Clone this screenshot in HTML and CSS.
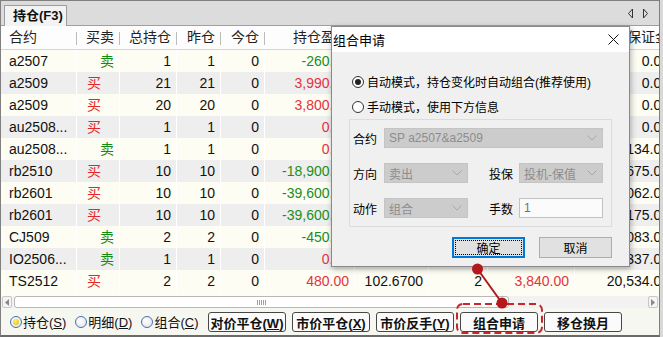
FILE: index.html
```html
<!DOCTYPE html>
<html>
<head>
  <meta charset="utf-8">
  <title>持仓</title>
  <link rel="stylesheet" href="styles.css">
</head>
<body>
  <div class="window">
    <div class="tabbar">
      <div class="tab">持仓(F3)</div>
      <div class="tab-arrows">
        <svg width="22" height="11" viewBox="0 0 22 11">
          <path d="M5.5 1 L1.5 5.5 L5.5 10 Z" fill="none" stroke="#333"/>
          <path d="M16.5 1 L20.5 5.5 L16.5 10 Z" fill="none" stroke="#333"/>
        </svg>
      </div>
    </div>

    <div class="grid">
      <div class="row head">
        <span class="left">合约</span><span>买卖</span><span>总持仓</span><span>昨仓</span><span>今仓</span><span>持仓盈亏</span><span>开仓均价</span><span>可平量</span><span>浮动盈亏</span><span>保证金</span>
      </div>
      <div class="row">
        <span class="left">a2507</span><span class="sell">卖</span><span>1</span><span>1</span><span>0</span><span class="green">-260.00</span><span>3,968.0000</span><span>1</span><span class="green">-260.00</span><span>0.00</span>
      </div>
      <div class="row alt">
        <span class="left">a2509</span><span class="buy">买</span><span>21</span><span>21</span><span>0</span><span class="red">3,990.00</span><span>3,852.0000</span><span>21</span><span class="red">3,990.00</span><span>0.00</span>
      </div>
      <div class="row">
        <span class="left">a2509</span><span class="buy">买</span><span>20</span><span>20</span><span>0</span><span class="red">3,800.00</span><span>3,850.0000</span><span>20</span><span class="red">3,800.00</span><span>0.00</span>
      </div>
      <div class="row alt">
        <span class="left">au2508...</span><span class="buy">买</span><span>1</span><span>1</span><span>0</span><span class="red">0.00</span><span>776.5000</span><span>1</span><span class="red">0.00</span><span>0.00</span>
      </div>
      <div class="row">
        <span class="left">au2508...</span><span class="sell">卖</span><span>1</span><span>1</span><span>0</span><span class="red">0.00</span><span>776.5000</span><span>1</span><span class="red">0.00</span><span>64,134.00</span>
      </div>
      <div class="row alt">
        <span class="left">rb2510</span><span class="buy">买</span><span>10</span><span>10</span><span>0</span><span class="green">-18,900.00</span><span>3,120.0000</span><span>10</span><span class="green">-18,900.00</span><span>30,675.00</span>
      </div>
      <div class="row">
        <span class="left">rb2601</span><span class="buy">买</span><span>10</span><span>10</span><span>0</span><span class="green">-39,600.00</span><span>3,340.0000</span><span>10</span><span class="green">-39,600.00</span><span>31,062.00</span>
      </div>
      <div class="row alt">
        <span class="left">rb2601</span><span class="buy">买</span><span>10</span><span>10</span><span>0</span><span class="green">-39,600.00</span><span>3,340.0000</span><span>10</span><span class="green">-39,600.00</span><span>31,175.00</span>
      </div>
      <div class="row">
        <span class="left">CJ509</span><span class="sell">卖</span><span>2</span><span>2</span><span>0</span><span class="green">-450.00</span><span>9,185.0000</span><span>2</span><span class="green">-450.00</span><span>12,083.00</span>
      </div>
      <div class="row alt">
        <span class="left">IO2506...</span><span class="sell">卖</span><span>1</span><span>1</span><span>0</span><span class="red">0.00</span><span>42.2000</span><span>1</span><span class="red">0.00</span><span>31,337.00</span>
      </div>
      <div class="row">
        <span class="left">TS2512</span><span class="buy">买</span><span>2</span><span>2</span><span>0</span><span class="red">480.00</span><span>102.6700</span><span>2</span><span class="red">3,840.00</span><span>20,534.00</span>
      </div>
    </div>

    <div class="hscroll">
      <div class="sb-btn">
        <svg width="4" height="7" viewBox="0 0 4 7"><path d="M4 0 L0 3.5 L4 7 Z" fill="#8a8a8a"/></svg>
      </div>
      <div class="sb-track">
        <div class="sb-thumb"><span class="grip"></span></div>
      </div>
      <div class="sb-btn">
        <svg width="4" height="7" viewBox="0 0 4 7"><path d="M0 0 L4 3.5 L0 7 Z" fill="#8a8a8a"/></svg>
      </div>
    </div>

    <div class="bottombar">
      <div class="opts">
        <label class="opt"><span class="rb on"></span><span class="opt-text">持仓(<u>S</u>)</span></label>
        <label class="opt"><span class="rb"></span><span class="opt-text">明细(<u>D</u>)</span></label>
        <label class="opt"><span class="rb"></span><span class="opt-text">组合(<u>C</u>)</span></label>
      </div>
      <button class="act">对价平仓(<u>W</u>)</button>
      <button class="act">市价平仓(<u>X</u>)</button>
      <button class="act">市价反手(<u>Y</u>)</button>
      <button class="act">组合申请</button>
      <button class="act">移仓换月</button>
    </div>
  </div>

  <div class="dialog">
    <div class="dlg-title">
      <span>组合申请</span>
      <svg class="close" width="11" height="11" viewBox="0 0 11 11">
        <path d="M0.5 0.5 L10.5 10.5 M10.5 0.5 L0.5 10.5" stroke="#111" stroke-width="1"/>
      </svg>
    </div>
    <div class="dlg-body">
      <div class="radio-row"><span class="dot on"></span><span>自动模式，持仓变化时自动组合(推荐使用)</span></div>
      <div class="radio-row"><span class="dot"></span><span>手动模式，使用下方信息</span></div>

      <div class="group">
        <span class="lbl">合约</span>
        <div class="combo wide"><span>SP a2507&amp;a2509</span>
          <svg width="10" height="6" viewBox="0 0 10 6"><path d="M0.5 0.5 L5 5 L9.5 0.5" fill="none" stroke="#a8a8a8"/></svg>
        </div>

        <span class="lbl">方向</span>
        <div class="combo"><span>卖出</span>
          <svg width="10" height="6" viewBox="0 0 10 6"><path d="M0.5 0.5 L5 5 L9.5 0.5" fill="none" stroke="#a8a8a8"/></svg>
        </div>
        <span class="lbl pad">投保</span>
        <div class="combo"><span>投机-保值</span>
          <svg width="10" height="6" viewBox="0 0 10 6"><path d="M0.5 0.5 L5 5 L9.5 0.5" fill="none" stroke="#a8a8a8"/></svg>
        </div>

        <span class="lbl">动作</span>
        <div class="combo"><span>组合</span>
          <svg width="10" height="6" viewBox="0 0 10 6"><path d="M0.5 0.5 L5 5 L9.5 0.5" fill="none" stroke="#a8a8a8"/></svg>
        </div>
        <span class="lbl pad">手数</span>
        <div class="num">1</div>
      </div>

      <div class="dlg-btns">
        <button class="ok">确定</button>
        <button class="cancel">取消</button>
      </div>
    </div>
  </div>

  <!-- annotation: pointer from the dialog to the button -->
  <svg class="mark" width="663" height="337" viewBox="0 0 663 337">
    <line x1="477.5" y1="269" x2="502" y2="303" stroke="#b3181d" stroke-width="2"/>
    <circle cx="477.5" cy="269" r="5.5" fill="#b3181d"/>
    <rect x="457" y="304" width="85" height="29" rx="6" fill="none" stroke="#c8262c" stroke-width="2" stroke-dasharray="7 4"/>
    <circle cx="502" cy="303" r="5.5" fill="#b3181d"/>
  </svg>
</body>
</html>
```

FILE: styles.css
```css
/* Global */
body {
  margin: 0;
  padding: 0;
  background: #d9d9d9;
  font-family: "Liberation Sans", "Noto Sans CJK SC", sans-serif;
}

.window {
  width: 660px;
  height: 337px;
  box-sizing: border-box;
  border: 1px solid #808080;
  border-bottom: 2px solid #6a6a6a;
  display: flex;
  flex-direction: column;
  background: #fdfdf3;
  overflow: hidden;
}

/* Tab strip */
.tabbar {
  height: 24px;
  flex: none;
  border-bottom: 1px solid #a0a0a0;
  background: #dcdcdc;
  display: flex;
  align-items: flex-end;
  padding-left: 3px;
}

.tab {
  width: 63px;
  height: 21px;
  margin-bottom: -1px;
  box-sizing: border-box;
  border: 1px solid #9c9c9c;
  border-bottom: none;
  background: #f3f3f3;
  font-weight: bold;
  font-size: 13px;
  line-height: 20px;
  padding-left: 8px;
  color: #111;
}

.tab-arrows {
  margin-left: auto;
  margin-right: 10px;
  align-self: center;
  display: flex;
}

/* Position grid */
.grid {
  flex: 1;
  overflow: hidden;
  background: #fdfdf3;
}

.row {
  display: grid;
  grid-template-columns: 76px 43px 57px 44px 44px 90px 74px 59px 87px 100px;
  width: max-content;
  height: 22px;
  line-height: 22px;
  font-size: 14px;
  color: #111;
  background: #fdfdf3;
}

.row.alt {
  background: #eeeeee;
}

.row span {
  padding: 0 5px;
  text-align: right;
  white-space: nowrap;
  overflow: hidden;
  border-right: 1px solid #fff;
}

.row.head {
  height: 24px;
  line-height: 23px;
  box-sizing: border-box;
  background: #fdfdfd;
  border-bottom: 1px solid #d5d5d5;
  color: #222;
}

.row.head span {
  border-right: none;
  padding-right: 6px;
  background: linear-gradient(#bcbcbc, #bcbcbc) right 6px / 1px 13px no-repeat;
}

.row span.left {
  text-align: left;
  padding-left: 8px;
}

.row span.buy {
  text-align: left;
  padding-left: 10px;
  color: #e5262b;
}

.row span.sell {
  color: #138a13;
}

.red {
  color: #e5323e;
}

.green {
  color: #1b8e1b;
}

/* Horizontal scrollbar */
.hscroll {
  height: 12px;
  flex: none;
  display: flex;
  background: #f2f2f2;
}

.sb-btn {
  width: 10px;
  margin: 0 1px;
  box-sizing: border-box;
  border: 1px solid #c8c8c8;
  border-radius: 2px;
  background: #f4f4f4;
  display: flex;
  align-items: center;
  justify-content: center;
}

.sb-track {
  flex: 1;
  display: flex;
  padding: 0 1px;
}

.sb-thumb {
  width: 495px;
  box-sizing: border-box;
  border: 1px solid #b8b8b8;
  border-radius: 3px;
  background: #fff;
  display: flex;
  align-items: center;
  justify-content: center;
}

.grip {
  width: 9px;
  height: 5px;
  background: repeating-linear-gradient(90deg, #a0a0a0 0 1px, transparent 1px 2px);
}

/* Bottom bar */
.bottombar {
  height: 27px;
  flex: none;
  display: flex;
  align-items: center;
  padding-left: 9px;
  background: #f7f7f2;
  font-size: 13px;
  color: #111;
}

.opts {
  width: 198px;
  flex: none;
  display: flex;
  align-items: center;
}

.opt {
  display: flex;
  align-items: center;
  margin-right: 9px;
}

.opt-text {
  white-space: nowrap;
}

.rb {
  width: 12px;
  height: 12px;
  flex: none;
  box-sizing: border-box;
  border: 1px solid #4b6ea8;
  border-radius: 50%;
  background: radial-gradient(circle at 40% 35%, #fff, #dbe2ec);
  margin-right: 1px;
  display: flex;
  align-items: center;
  justify-content: center;
}

.rb.on::after {
  content: "";
  width: 6px;
  height: 6px;
  border-radius: 50%;
  background: radial-gradient(circle at 40% 35%, #fff46a, #e2b000);
}

.act {
  width: 78px;
  height: 20px;
  flex: none;
  margin-right: 6px;
  padding: 0;
  box-sizing: border-box;
  border: 1px solid #474747;
  border-radius: 3px;
  background: #fbfbfb;
  font-family: "Liberation Sans", "Noto Sans CJK SC", sans-serif;
  font-weight: bold;
  font-size: 13px;
  color: #111;
  white-space: nowrap;
}

/* Dialog */
.dialog {
  position: absolute;
  left: 331px;
  top: 26px;
  width: 299px;
  height: 241px;
  box-sizing: border-box;
  border: 1px solid #8a8a8a;
  background: #f0f0f0;
  box-shadow: 1px 2px 6px rgba(0, 0, 0, 0.3);
  font-size: 12px;
  color: #000;
}

.dlg-title {
  height: 25px;
  background: #fff;
  display: flex;
  align-items: center;
  padding-left: 1px;
  font-size: 13px;
}

.close {
  margin-left: auto;
  margin-right: 10px;
}

.dlg-body {
  padding: 17px 0 0 17px;
}

.radio-row {
  display: flex;
  align-items: center;
  height: 25px;
  padding-left: 3px;
  white-space: nowrap;
}

.dot {
  width: 12px;
  height: 12px;
  flex: none;
  box-sizing: border-box;
  border: 1px solid #333;
  border-radius: 50%;
  background: #fff;
  margin-right: 3px;
  display: flex;
  align-items: center;
  justify-content: center;
}

.dot.on::after {
  content: "";
  width: 6px;
  height: 6px;
  border-radius: 50%;
  background: #222;
}

.group {
  width: 263px;
  height: 108px;
  box-sizing: border-box;
  border: 1px solid #dcdcdc;
  padding: 8px 0 0 3px;
  display: grid;
  grid-template-columns: 31px 84px 51px 84px;
  grid-auto-rows: 20px;
  row-gap: 15px;
  align-items: center;
}

.lbl {
  font-size: 12px;
  white-space: nowrap;
}

.lbl.pad {
  padding-left: 21px;
}

.combo,
.num {
  height: 20px;
  box-sizing: border-box;
  display: flex;
  align-items: center;
  padding-left: 4px;
  font-size: 12px;
  white-space: nowrap;
}

.combo {
  background: #cccccc;
  border: 1px solid #c4c4c4;
  color: #8c8c8c;
}

.combo svg {
  margin-left: auto;
  margin-right: 5px;
  flex: none;
}

.combo.wide {
  grid-column: 2 / span 3;
}

.num {
  background: #fbfbfb;
  border: 1px solid #c2c2c2;
  color: #707070;
}

.dlg-btns {
  width: 263px;
  display: flex;
  justify-content: flex-end;
  gap: 14px;
  margin-top: 10px;
}

.dlg-btns button {
  width: 73px;
  height: 21px;
  padding: 0;
  box-sizing: border-box;
  background: #e1e1e1;
  font-family: "Liberation Sans", "Noto Sans CJK SC", sans-serif;
  font-size: 12px;
  color: #000;
}

.ok {
  border: 2px solid #0078d7;
  outline: 1px dotted #000;
  outline-offset: -4px;
}

.cancel {
  border: 1px solid #adadad;
}

/* Annotation overlay */
.mark {
  position: absolute;
  left: 0;
  top: 0;
  pointer-events: none;
}
```
